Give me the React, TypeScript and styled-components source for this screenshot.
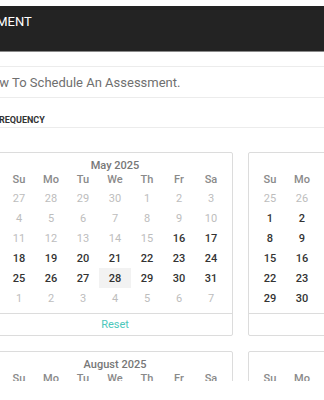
import React from 'react';
import styled, {createGlobalStyle} from "styled-components";

const GlobalStyle = createGlobalStyle`
  html, body {
    margin: 0;
    padding: 0;
    background: #fff;
    font-family: Roboto, "Liberation Sans", Arial, sans-serif;
  }
`

const DOW = ['Su', 'Mo', 'Tu', 'We', 'Th', 'Fr', 'Sa']
const MONTHS = ['January', 'February', 'March', 'April', 'May', 'June', 'July', 'August', 'September', 'October', 'November', 'December']

const today = new Date(2025, 4, 28)
const firstOpen = new Date(2025, 4, 16)

function buildWeeks(year: number, month: number) {
    const first = new Date(year, month, 1)
    let offset = first.getDay()
    if (offset === 0) offset = 7
    const start = new Date(year, month, 1 - offset)
    const days: Array<{ date: Date, inMonth: boolean }> = []
    for (let i = 0; i < 42; i++) {
        const d = new Date(start.getFullYear(), start.getMonth(), start.getDate() + i)
        days.push({date: d, inMonth: d.getMonth() === month})
    }
    return days
}

function MonthCard({year, month}: { year: number, month: number }) {
    const days = buildWeeks(year, month)
    return (
        <Card>
            <CardBody>
                <MonthTitle>{MONTHS[month]} {year}</MonthTitle>
                <DayGrid>
                    {DOW.map(d => <DowCell key={d}>{d}</DowCell>)}
                    {days.map(({date, inMonth}) => {
                        const active = inMonth && date >= firstOpen
                        const isToday = date.getTime() === today.getTime()
                        return (
                            <DayCell key={date.toISOString()} $active={active} $today={isToday}>
                                {date.getDate()}
                            </DayCell>
                        )
                    })}
                </DayGrid>
            </CardBody>
            <CardFooter>{month === 4 ? <ResetLink>Reset</ResetLink> : null}</CardFooter>
        </Card>
    )
}

function App() {
    const months = [4, 5, 6, 7, 8, 9]
    return (
        <Page>
            <GlobalStyle/>
            <Shift>
                <TitleBar>SCHEDULE ASSESSMENT</TitleBar>
                <Instruction>Please Select A Date Below To Schedule An Assessment.</Instruction>
                <SectionLabel>ASSESSMENT FREQUENCY</SectionLabel>
                <Calendars>
                    {months.map(m => <MonthCard key={m} year={2025} month={m}/>)}
                </Calendars>
            </Shift>
        </Page>
    );
}

const Page = styled.div`
  width: 324px;
  height: 381px;
  overflow: hidden;
  background: #fff;
`

const Shift = styled.div`
  margin-left: -160px;
  width: 900px;
  padding-top: 6px;
`

const TitleBar = styled.div`
  height: 46px;
  box-sizing: border-box;
  background: #232323;
  border-bottom: 1px solid #8a8a8a;
  color: #fff;
  font-size: 13px;
  line-height: 20px;
  padding: 6px 0 0 42px;
`

const Instruction = styled.div`
  margin-top: 14px;
  height: 32px;
  box-sizing: border-box;
  border-top: 1px solid #ececec;
  border-bottom: 1px solid #ececec;
  display: flex;
  align-items: center;
  padding-left: 11px;
  font-size: 13px;
  color: #6f6f6f;
`

const SectionLabel = styled.div`
  height: 30px;
  box-sizing: border-box;
  border-bottom: 1px solid #ececec;
  padding: 17px 0 0 94px;
  font-size: 9px;
  line-height: 10px;
  font-weight: 700;
  color: #333;
`

const Calendars = styled.div`
  margin-top: 24px;
  padding-left: 157px;
  display: grid;
  grid-template-columns: repeat(3, 236px);
  gap: 15px;
`

const Card = styled.div`
  border: 1px solid #dcdcdc;
  border-radius: 2px;
`

const CardBody = styled.div`
  padding: 7px 5px 5px 5px;
`

const MonthTitle = styled.div`
  text-align: center;
  font-size: 11px;
  line-height: 12px;
  font-weight: 500;
  color: #777;
`

const DayGrid = styled.div`
  display: grid;
  grid-template-columns: repeat(7, 32px);
  grid-auto-rows: 20px;
  grid-template-rows: 16px;
`

const DowCell = styled.div`
  text-align: center;
  font-size: 11px;
  line-height: 16px;
  font-weight: 500;
  color: #8a8a8a;
`

const DayCell = styled.div<{ $active: boolean, $today: boolean }>`
  display: flex;
  align-items: center;
  justify-content: center;
  font-size: 11px;
  font-weight: ${p => p.$active ? 500 : 400};
  color: ${p => p.$active ? '#333' : '#bdbdbd'};
  background: ${p => p.$today ? '#f2f2f2' : 'transparent'};
`

const CardFooter = styled.div`
  height: 21px;
  border-top: 1px solid #dcdcdc;
  display: flex;
  align-items: center;
  justify-content: center;
`

const ResetLink = styled.span`
  font-size: 11px;
  color: #4cc7bb;
`

export default App;
